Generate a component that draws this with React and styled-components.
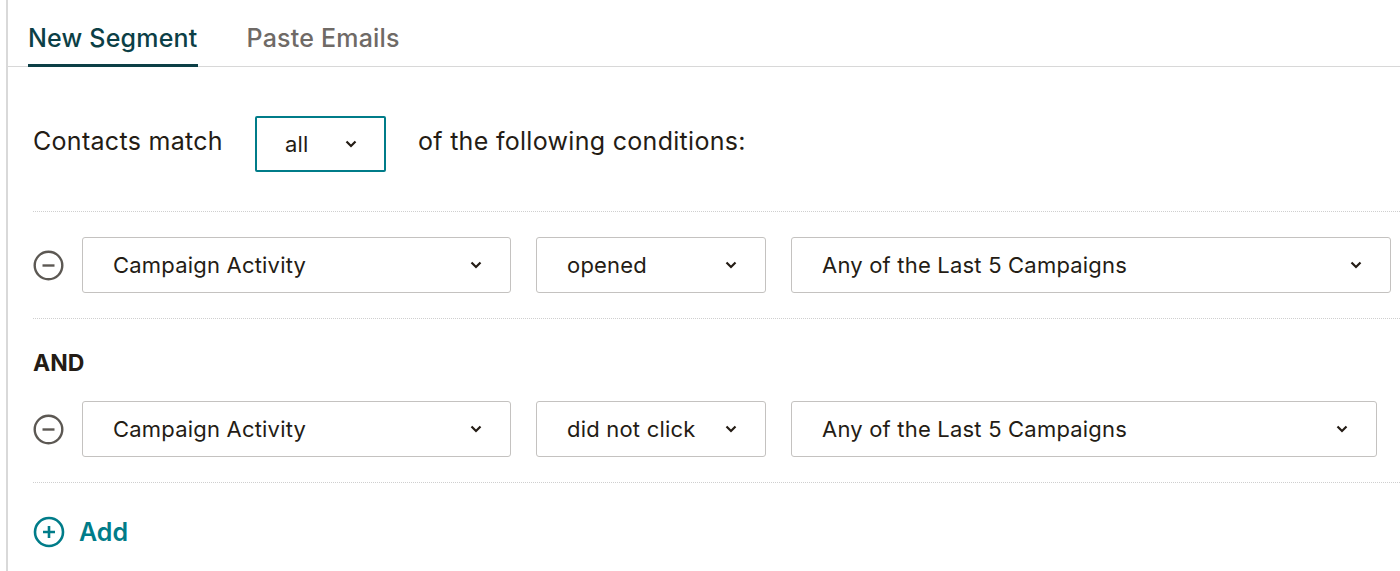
import React from 'react';
import styled, { createGlobalStyle } from 'styled-components';

const GlobalStyle = createGlobalStyle`
  html, body {
    margin: 0;
    background: #fff;
    font-family: Inter, "Open Sans", "Liberation Sans", sans-serif;
    color: #241c15;
    overflow: hidden;
  }
`;

const Page = styled.div`
  margin-left: 6px;
  border-left: 2px solid #d9d9d9;
  height: 571px;
  overflow: hidden;
`;

const Tabs = styled.div`
  display: flex;
  gap: 49px;
  padding-left: 20px;
  border-bottom: 1px solid #d8d8d8;
  height: 66px;
`;

const Tab = styled.div`
  font-size: 25px;
  font-weight: 500;
  letter-spacing: 0.2px;
  color: ${p => (p.active ? '#0c3f46' : '#6f6a66')};
  padding-top: 23px;
  box-sizing: border-box;
  height: 67px;
  border-bottom: 3px solid ${p => (p.active ? '#0c3f46' : 'transparent')};
`;

const Body = styled.div`
  padding-left: 25px;
`;

const MatchRow = styled.div`
  display: flex;
  align-items: center;
  gap: 32px;
  margin-top: 49px;
  font-size: 25px;
  letter-spacing: 0.3px;

  & > span {
    position: relative;
    top: -3px;
  }
`;

const Divider = styled.div`
  border-top: 1px dotted #cfcfcf;
  margin-top: ${p => p.top}px;
`;

const ConditionRow = styled.div`
  display: flex;
  align-items: center;
  margin-top: ${p => p.top}px;
`;

const IconButton = styled.button`
  border: none;
  background: none;
  padding: 0;
  width: 31px;
  height: 31px;
  margin-right: 18px;
  display: flex;
  cursor: pointer;
`;

const Select = styled.div`
  box-sizing: border-box;
  width: ${p => p.w}px;
  height: 56px;
  margin-right: ${p => (p.focus ? 0 : 25)}px;
  border: ${p => (p.focus ? '2px solid #007c89' : '1px solid #c4c2c0')};
  border-radius: ${p => (p.focus ? 2 : 3)}px;
  display: flex;
  align-items: center;
  justify-content: space-between;
  padding: 0 ${p => (p.focus ? 27 : 28)}px 0 ${p => (p.focus ? 28 : 30)}px;
  font-size: 22px;
  flex-shrink: 0;
  letter-spacing: 0.2px;
`;

const AndLabel = styled.div`
  font-size: 23px;
  font-weight: 700;
  margin-top: 30px;
  line-height: 28px;
`;

const AddButton = styled.button`
  display: flex;
  align-items: center;
  gap: 14px;
  margin-top: 33px;
  border: none;
  background: none;
  padding: 0;
  font-family: inherit;
  font-size: 25px;
  font-weight: 600;
  color: #007c89;
  cursor: pointer;
`;

const Chevron = () => (
  <svg width="12" height="8" viewBox="0 0 12 8">
    <path d="M1.5 1.5l4.5 4.5 4.5-4.5" fill="none" stroke="#241c15" strokeWidth="2.2" />
  </svg>
);

const MinusCircle = () => (
  <svg width="31" height="31" viewBox="0 0 31 31">
    <circle cx="15.5" cy="15.5" r="13.8" fill="none" stroke="#5c5853" strokeWidth="2.4" />
    <path d="M9.5 15.5h12" stroke="#5c5853" strokeWidth="2.4" />
  </svg>
);

const PlusCircle = () => (
  <svg width="32" height="32" viewBox="0 0 32 32">
    <circle cx="16" cy="16" r="14" fill="none" stroke="#007c89" strokeWidth="2.6" />
    <path d="M10 16h12M16 10v12" stroke="#007c89" strokeWidth="2.6" />
  </svg>
);

const Condition = ({ top, field, op, value, lastWidth }) => (
  <ConditionRow top={top}>
    <IconButton aria-label="remove">
      <MinusCircle />
    </IconButton>
    <Select w={429}>
      <span>{field}</span>
      <Chevron />
    </Select>
    <Select w={230}>
      <span>{op}</span>
      <Chevron />
    </Select>
    <Select w={lastWidth}>
      <span>{value}</span>
      <Chevron />
    </Select>
  </ConditionRow>
);

export default function App() {
  return (
    <>
      <GlobalStyle />
      <Page>
        <Tabs>
          <Tab active>New Segment</Tab>
          <Tab>Paste Emails</Tab>
        </Tabs>
        <Body>
          <MatchRow>
            <span>Contacts match</span>
            <Select focus w={131}>
              <span>all</span>
              <Chevron />
            </Select>
            <span>of the following conditions:</span>
          </MatchRow>
          <Divider top={39} />
          <Condition top={25} field="Campaign Activity" op="opened" value="Any of the Last 5 Campaigns" lastWidth={600} />
          <Divider top={25} />
          <AndLabel>AND</AndLabel>
          <Condition top={24} field="Campaign Activity" op="did not click" value="Any of the Last 5 Campaigns" lastWidth={586} />
          <Divider top={25} />
          <AddButton>
            <PlusCircle />
            Add
          </AddButton>
        </Body>
      </Page>
    </>
  );
}
